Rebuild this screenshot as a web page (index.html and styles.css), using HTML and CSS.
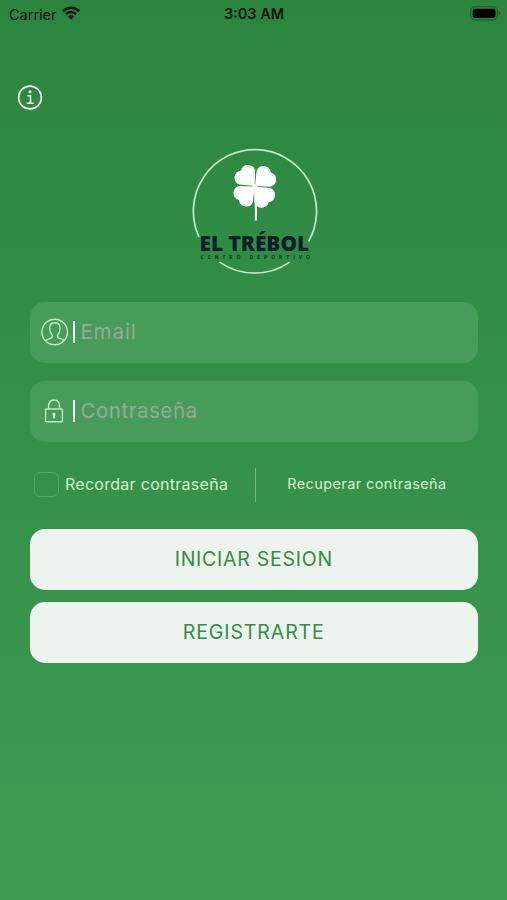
FILE: index.html
```html
<!DOCTYPE html>
<html lang="es">
<head>
<meta charset="utf-8">
<title>El Trébol</title>
<link rel="stylesheet" href="styles.css">
</head>
<body>
<header class="status">
  <div class="carrier"><span class="carrier-name">Carrier</span>
    <svg width="18" height="14" viewBox="0 0 18 14" fill="none" stroke="#04150a" stroke-width="2.5"><path d="M.9 5.1C5.3.5 12.7.5 17.1 5.1M3.9 8.2C6.7 5.3 11.3 5.3 14.1 8.2"/><path d="M9 13.6 5.9 10.5C7.6 8.9 10.4 8.9 12.1 10.5Z" fill="#04150a" stroke="none"/></svg>
  </div>
  <span class="time">3:03 AM</span>
  <svg class="battery" width="31" height="15" viewBox="0 0 31 15"><rect x=".7" y=".7" width="26.6" height="13.2" rx="4" fill="none" stroke="#1d612c" stroke-width="1.2"/><rect x="2.7" y="2.7" width="22.8" height="9.2" rx="2" fill="#000"/><path d="M28.6 5v4.6q2-.8 2-2.3t-2-2.3" fill="#1d612c"/></svg>
</header>
<main class="login">
  <button class="info" aria-label="Info">
    <svg width="26" height="26" viewBox="0 0 26 26" fill="none" stroke="#f0fff0"><circle cx="13" cy="12.5" r="11.4" stroke-width="1.7"/><circle cx="13" cy="6.8" r="1.5" fill="#f0fff0" stroke="none"/><path d="M10.2 10.7h3.3v7.4M9.8 18.2h6.8" stroke-width="1.6"/></svg>
  </button>
  <svg class="logo" width="130" height="130" viewBox="0 0 130 130">
    <g fill="none" stroke="#c3e8c4" stroke-width="1.7"><path d="M9 91A61.6 61.6 0 1 1 118.6 95.5"/><path d="M29.5 116.1A61.6 61.6 0 0 0 99.7 116.1"/></g>
    <path d="M64.8 41Q66.4 58 65.8 74.5" fill="none" stroke="#fff" stroke-width="2.1"/>
    <g fill="#fff" transform="translate(64.8 40.3) rotate(4)">
      <path id="leaf" d="M-.2-.2-.7-15.5A7.3 7.3 0 0 0-14.9-14.9 7.3 7.3 0 0 0-15.5-.7Z"/>
      <use href="#leaf" transform="rotate(90)"/><use href="#leaf" transform="rotate(180)"/><use href="#leaf" transform="rotate(270)"/>
      <circle r="2.3"/>
    </g>
    <text class="brand" x="9.6" y="104.8" textLength="109.5" lengthAdjust="spacingAndGlyphs">EL TRÉBOL</text>
    <text class="tagline" x="10.5" y="113" textLength="109.5">CENTRO DEPORTIVO</text>
  </svg>
  <form class="form">
    <div class="field">
      <svg width="28" height="28" viewBox="0 0 28 28" fill="none" stroke="#bdecc0" stroke-width="1.4"><circle cx="13.7" cy="14" r="12.8"/><path d="M4.7 22.6C6 20.7 11.2 20.8 11.4 18.4 11.5 16.8 9.9 15.7 9.2 13.4 7.8 8.4 9.2 4.8 13.9 4.8S20 8.4 18.6 13.4C17.9 15.7 16.3 16.8 16.4 18.4 16.6 20.8 21.8 20.7 23 22.6"/></svg>
      <span class="bar"></span><span class="placeholder email">Email</span>
    </div>
    <div class="field">
      <svg width="28" height="28" viewBox="0 0 28 28" fill="none" stroke="#bdecc0" stroke-width="1.4"><rect x="4.6" y="12" width="16.8" height="12.8" rx=".6"/><path d="M7.6 12V8.3C7.6 1.3 18.4 1.3 18.4 8.3V12"/><path d="M13 15.8a1.5 1.5 0 0 1 1 2.7l-.3 3h-1.4l-.3-3a1.5 1.5 0 0 1 1-2.7" fill="#eaffea" stroke="none"/></svg>
      <span class="bar"></span><span class="placeholder pass">Contraseña</span>
    </div>
    <div class="options">
      <span class="checkbox"></span><span class="remember">Recordar contraseña</span>
      <span class="divider"></span><span class="recover">Recuperar contraseña</span>
    </div>
    <button type="button" class="action"><span class="signin">INICIAR SESION</span></button>
    <button type="button" class="action"><span class="register">REGISTRARTE</span></button>
  </form>
</main>
</body>
</html>
```
FILE: styles.css
```css
* { box-sizing: border-box; }
body { margin: 0; height: 900px; overflow: hidden; background: linear-gradient(#2b853e, #35914a 50%, #3f9b52); font-family: Inter, "Liberation Sans", sans-serif; }
button { border: 0; padding: 0; font: inherit; }
.status { display: grid; grid-template-columns: 1fr auto 1fr; align-items: center; height: 28px; padding: 0 8px 0 9px; color: #04150a; }
.carrier { display: flex; align-items: center; gap: 5px; }
.carrier svg { margin-top: -2px; }
.carrier-name { font-size: 14.5px; }
.time { margin-top: -1px; font-size: 14.5px; font-weight: 600; }
.battery { justify-self: end; margin: -2px -2px 0 0; }
.login { padding: 56px 29.5px 0 30px; }
.info { display: block; width: 26px; height: 26px; margin-left: -13px; background: none; }
.info svg { display: block; margin-top: 1px; }
.logo { display: block; margin: 36px 0 0 160px; }
.brand { font: 800 20.5px "Open Sans", sans-serif; fill: #07202a; }
.tagline { font: 700 5px "Open Sans", sans-serif; fill: #0b3528; }
.form { display: flex; flex-direction: column; margin-top: 26px; }
.field { display: flex; align-items: center; height: 60.5px; margin-bottom: 18.5px; padding-left: 11px; border-radius: 15px; background: #479c5b; }
.field svg { flex: none; }
.bar { width: 2.4px; height: 22px; margin: 0 5px 0 4px; background: #f2fff2; }
.placeholder { margin-top: -2px; color: #98aa94; font-size: 20.5px; font-weight: 400; }
.email { letter-spacing: .9px; }
.pass { letter-spacing: .55px; }
.options { display: flex; align-items: center; height: 50px; margin-top: -.5px; padding-left: 4px; white-space: nowrap; color: #cff2cd; }
.checkbox { width: 25px; height: 25px; border: 1.3px solid #53a863; border-radius: 6px; margin-right: 6px; }
.remember { width: 190px; margin-top: -1px; font-size: 16px; letter-spacing: .28px; }
.divider { width: 1.2px; height: 34px; background: #75bb80; }
.recover { margin: -2px 0 0 31px; font-size: 14.5px; letter-spacing: .39px; }
.action { height: 61px; margin-top: 19px; padding-bottom: 1px; border-radius: 15px; background: #ecf4ed; color: #338c45; font-size: 19.5px; }
.action + .action { margin-top: 12px; }
.signin { letter-spacing: .75px; }
.register { letter-spacing: .9px; }
```
